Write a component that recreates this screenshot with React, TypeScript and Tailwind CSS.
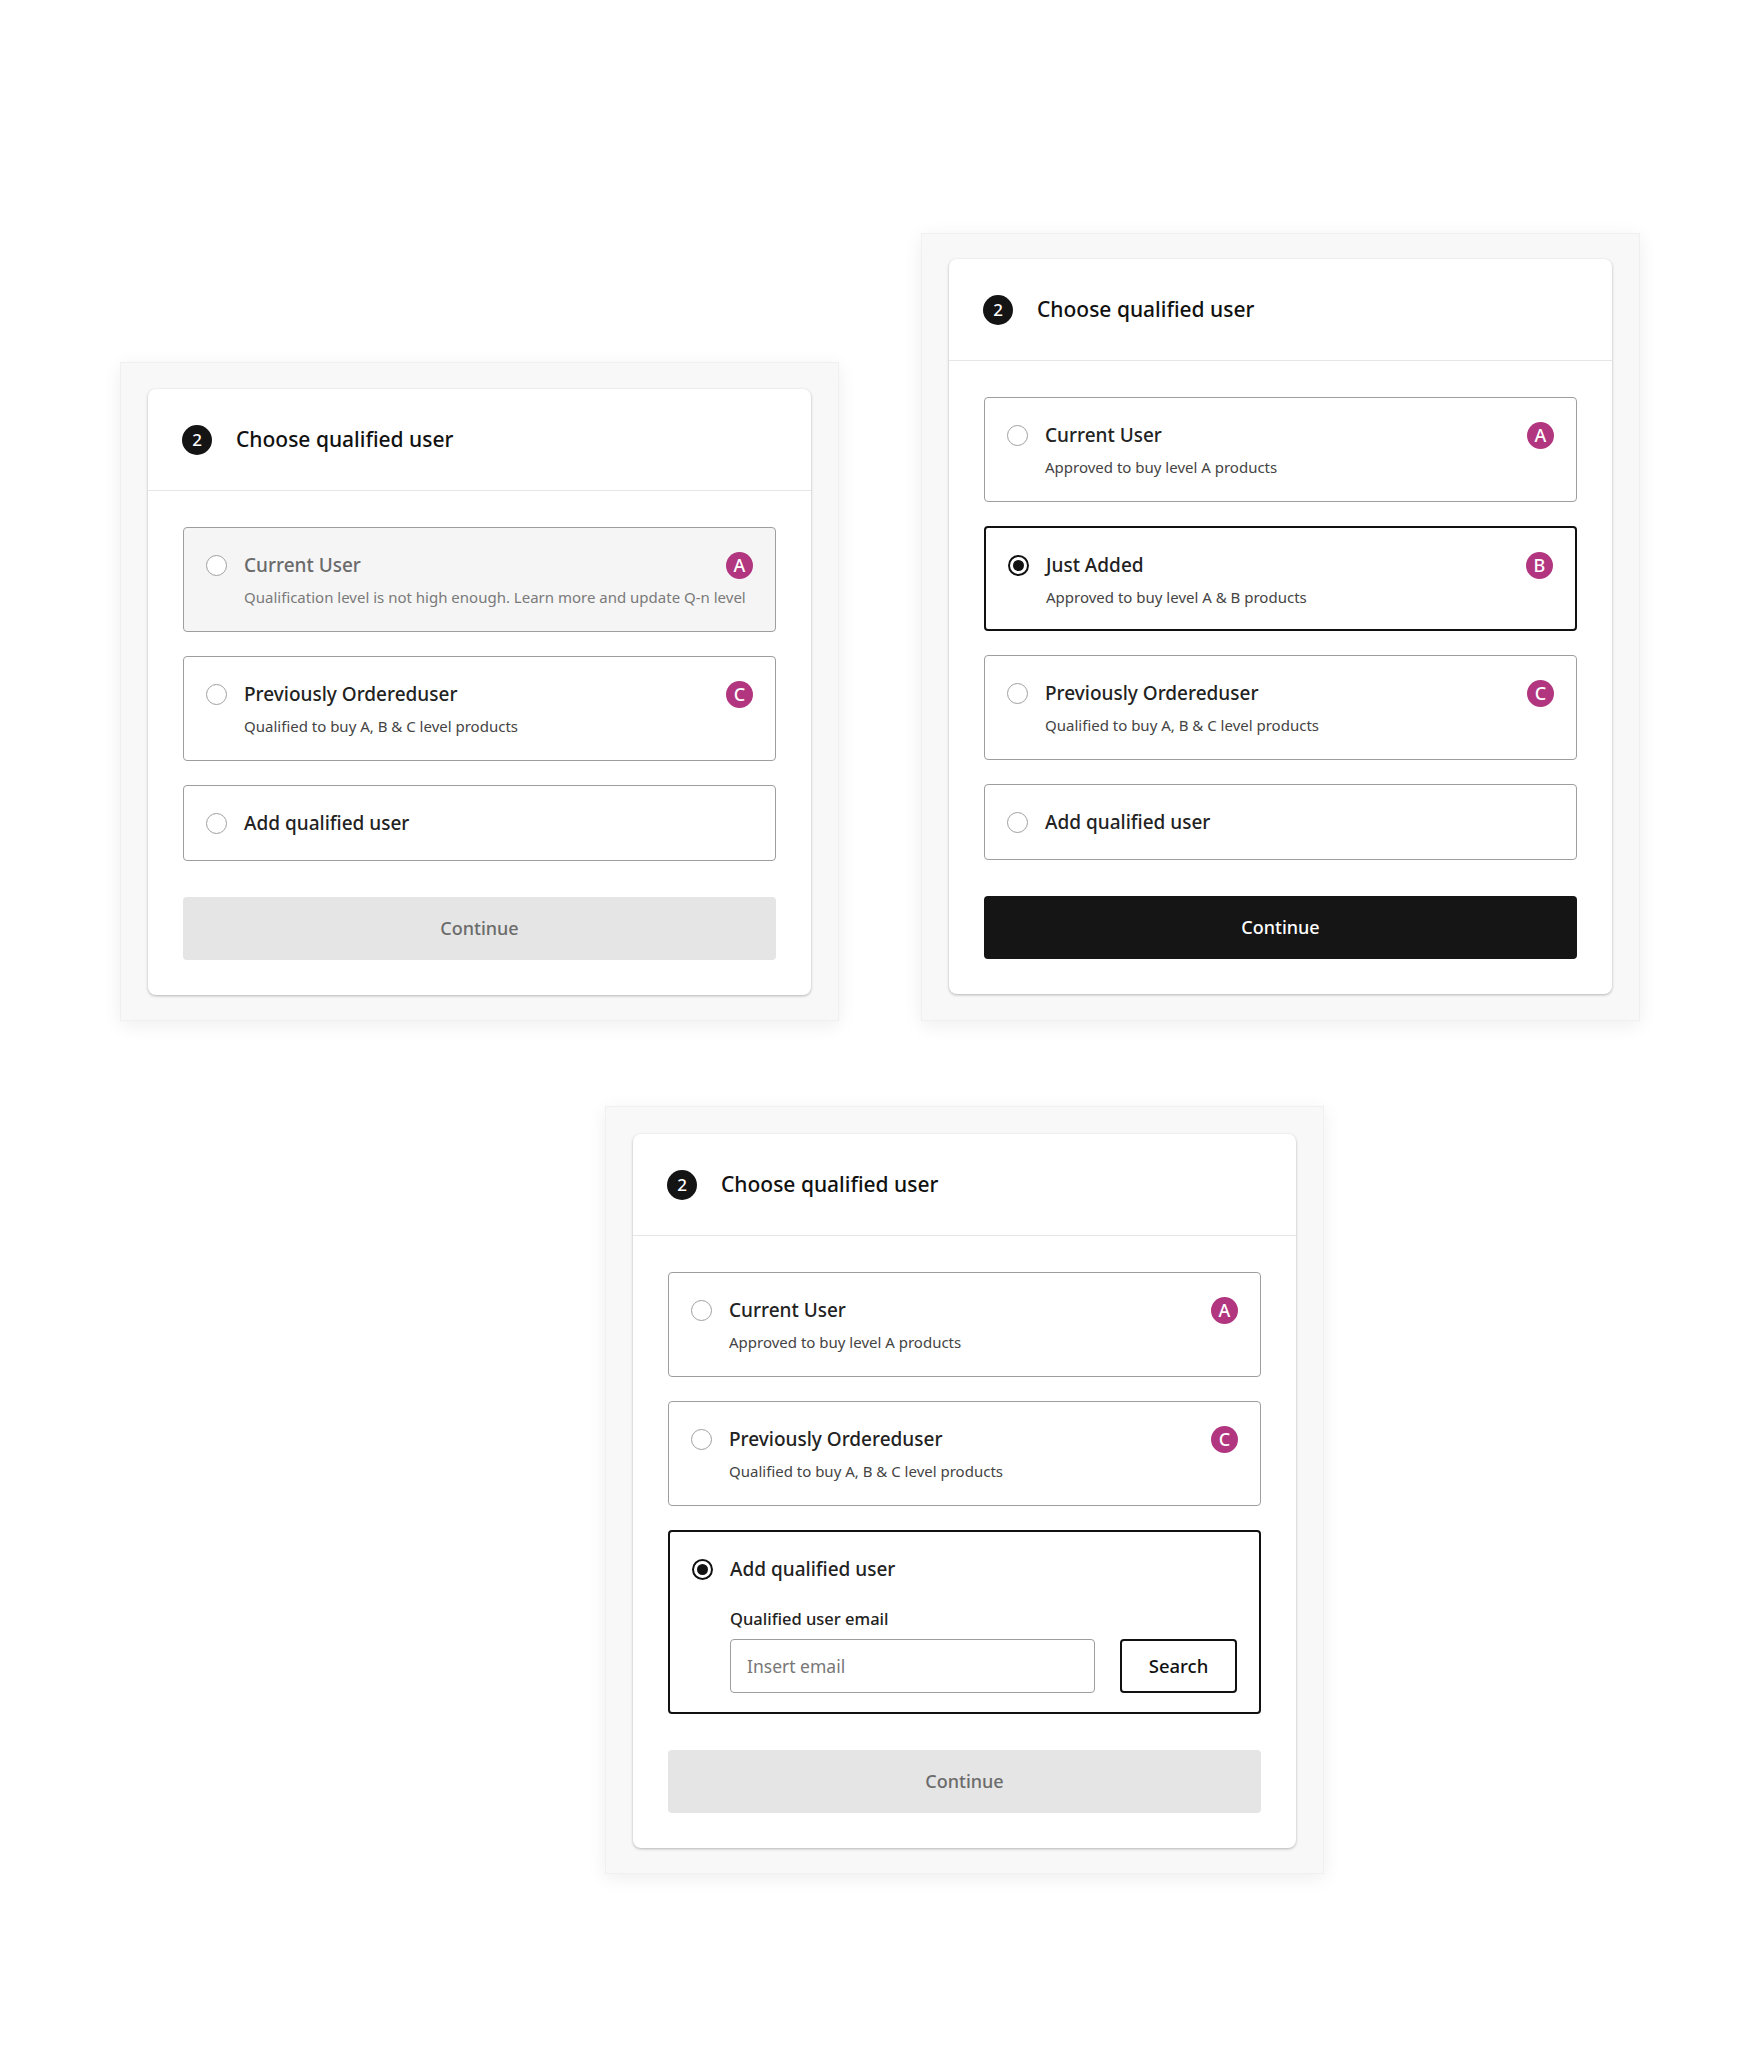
import React from "react";

type Opt = {
  title: string;
  sub?: string;
  badge?: string;
  selected?: boolean;
  disabled?: boolean;
  expanded?: boolean;
};

function Radio({ selected }: { selected?: boolean }) {
  if (selected) {
    return (
      <div className="w-[21px] h-[21px] rounded-full border-[2.5px] border-[#111] flex items-center justify-center shrink-0">
        <div className="w-[11px] h-[11px] rounded-full bg-[#111]" />
      </div>
    );
  }
  return <div className="w-[21px] h-[21px] rounded-full border-[1.5px] border-[#a0a0a0] bg-white shrink-0" />;
}

function Badge({ letter }: { letter: string }) {
  return (
    <div className="w-[27px] h-[27px] rounded-full bg-[#b1367f] text-white flex items-center justify-center text-[18px] leading-none font-medium shrink-0">
      {letter}
    </div>
  );
}

function Option({ o }: { o: Opt }) {
  const border = o.selected ? "border-2 border-[#111]" : "border border-[#9e9e9e]";
  const bg = o.disabled ? "bg-[#f5f5f5]" : "bg-white";
  let pad = "pt-[25px] pb-[25px]";
  if (o.sub) pad = o.selected ? "pt-[25px] pb-[22px]" : "pt-[25px] pb-[24px]";
  else if (o.expanded) pad = "pt-[25px] pb-[19px]";
  return (
    <div className={`rounded-[4px] ${border} ${bg} ${pad} pl-[22px] pr-[22px]`}>
      <div className="flex items-center h-[24px]">
        <Radio selected={o.selected} />
        <div
          className={`ml-[17px] flex-1 text-[19px] leading-[24px] font-medium ${o.disabled ? "text-[#6a6a6a]" : "text-[#222]"}`}
        >
          {o.title}
        </div>
        {o.badge && <Badge letter={o.badge} />}
      </div>
      {o.sub && (
        <div
          className={`ml-[38px] mt-[10px] text-[15px] leading-[20px] ${o.disabled ? "text-[#7a7a7a]" : "text-[#444]"}`}
        >
          {o.sub}
        </div>
      )}
      {o.expanded && (
        <div className="ml-[38px] mt-[28px]">
          <div className="text-[16.5px] leading-[20px] font-medium text-[#222]">Qualified user email</div>
          <div className="flex items-center gap-[25px] mt-[10px]">
            <div className="w-[365px] h-[54px] rounded-[4px] border border-[#9e9e9e] flex items-center px-[16px] text-[17.5px] text-[#777]">
              Insert email
            </div>
            <div className="w-[117px] h-[54px] rounded-[4px] border-2 border-[#111] flex items-center justify-center text-[18.5px] font-medium text-[#111]">
              Search
            </div>
          </div>
        </div>
      )}
    </div>
  );
}

function Panel({
  options,
  active,
  className,
}: {
  options: Opt[];
  active?: boolean;
  className?: string;
}) {
  return (
    <div
      className={`w-[719px] bg-[#f8f8f8] border border-[#f0f0f0] px-[27px] shadow-[0_4px_18px_rgba(0,0,0,0.07)] ${className ?? ""}`}
    >
      <div className="bg-white rounded-[8px] shadow-[0_1px_3px_rgba(0,0,0,0.28)]">
        <div className="h-[102px] flex items-center pl-[34px] border-b border-[#e6e6e6]">
          <div className="w-[30px] h-[30px] rounded-full bg-[#141414] text-white flex items-center justify-center text-[17px] font-medium leading-none">
            2
          </div>
          <div className="ml-[24px] text-[21px] font-medium text-[#111]">Choose qualified user</div>
        </div>
        <div className="px-[35px] pt-[36px] pb-[35px]">
          <div className="flex flex-col gap-[24px]">
            {options.map((o, i) => (
              <Option key={i} o={o} />
            ))}
          </div>
          <div
            className={`mt-[36px] h-[63px] rounded-[4px] flex items-center justify-center text-[18px] font-medium ${
              active ? "bg-[#151515] text-white" : "bg-[#e5e5e5] text-[#6b6b6b]"
            }`}
          >
            Continue
          </div>
        </div>
      </div>
    </div>
  );
}

export default function App() {
  const p1: Opt[] = [
    {
      title: "Current User",
      sub: "Qualification level is not high enough. Learn more and update Q-n level",
      badge: "A",
      disabled: true,
    },
    { title: "Previously Ordereduser", sub: "Qualified to buy A, B & C level products", badge: "C" },
    { title: "Add qualified user" },
  ];
  const p2: Opt[] = [
    { title: "Current User", sub: "Approved to buy level A products", badge: "A" },
    { title: "Just Added", sub: "Approved to buy level A & B products", badge: "B", selected: true },
    { title: "Previously Ordereduser", sub: "Qualified to buy A, B & C level products", badge: "C" },
    { title: "Add qualified user" },
  ];
  const p3: Opt[] = [
    { title: "Current User", sub: "Approved to buy level A products", badge: "A" },
    { title: "Previously Ordereduser", sub: "Qualified to buy A, B & C level products", badge: "C" },
    { title: "Add qualified user", selected: true, expanded: true },
  ];
  return (
    <div
      className="min-h-[2048px] bg-white pt-[233px] px-[120px]"
      style={{ fontFamily: '"Noto Sans", "Open Sans", sans-serif' }}
    >
      <div className="flex items-end gap-[82px]">
        <Panel options={p1} className="pt-[26px] pb-[25px]" />
        <Panel options={p2} active className="pt-[25px] pb-[26px]" />
      </div>
      <div className="mt-[85px] ml-[485px]">
        <Panel options={p3} className="w-[716px] pt-[27px] pb-[25px]" />
      </div>
    </div>
  );
}
